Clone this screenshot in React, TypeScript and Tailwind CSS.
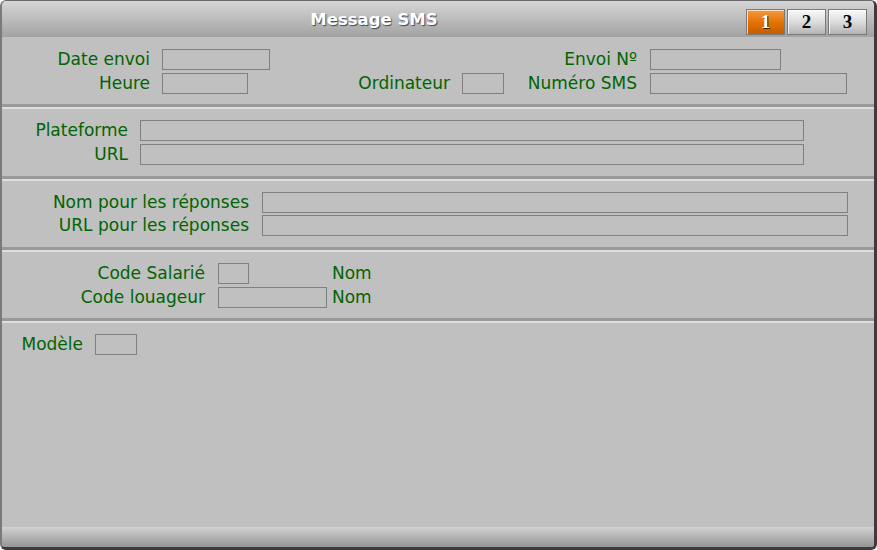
import React from 'react';

const font = { fontFamily: '"DejaVu Sans", Verdana, sans-serif' };

function Field({ w }: { w: number }) {
    return <div className="h-[21px] border border-[#808080] bg-[#c0c0c0] shrink-0" style={{ width: w }} />;
}

function Label({ w, text }: { w: number; text: string }) {
    return (
        <div className="shrink-0 text-right text-[17px] leading-[21px] text-[#006400] whitespace-nowrap" style={{ width: w }}>
            {text}
        </div>
    );
}

function Separator() {
    return (
        <div className="shrink-0">
            <div className="h-[3px] bg-[#999999]" />
            <div className="h-[2px] bg-[#dedede]" />
        </div>
    );
}

function Tab({ n, active }: { n: number; active?: boolean }) {
    return (
        <div
            className={`w-[39px] h-[26px] border border-[#7a7a7a] flex items-center justify-center text-[19px] font-bold ${
                active
                    ? 'bg-gradient-to-b from-[#f39a3a] via-[#e67300] to-[#c45e00] text-white [text-shadow:1px_1px_0_#3a2000]'
                    : 'bg-gradient-to-b from-[#fafafa] via-[#dcdcdc] to-[#b4b4b4] text-black'
            } shadow-[inset_1px_1px_0_rgba(255,255,255,0.7)]`}
            style={{ fontFamily: '"Liberation Serif", "Times New Roman", serif' }}
        >
            {n}
        </div>
    );
}

export default function App() {
    return (
        <div className="w-[877px] h-[550px] bg-white">
            <div
                className="w-full h-full flex flex-col bg-[#c0c0c0] rounded-[6px] overflow-hidden border-t border-l-2 border-r-[3px] border-b-[3px] border-t-[#6a6a6a] border-l-[#7a7a7a] border-r-[#3c3c3c] border-b-[#3c3c3c]"
                style={font}
            >
                {/* TITLE BAR */}
                <div className="h-[36px] shrink-0 flex items-start bg-gradient-to-b from-[#d6d6d6] to-[#a2a2a2]">
                    <div className="flex-1 h-full flex items-center justify-center pt-[3px] text-[16.5px] font-bold text-white [text-shadow:1px_1px_1px_#3a4660]">
                        Message SMS
                    </div>
                    <div className="flex gap-[2px] mt-[8px] mr-[7px]">
                        <Tab n={1} active />
                        <Tab n={2} />
                        <Tab n={3} />
                    </div>
                </div>

                {/* SECTION 1 */}
                <div className="pt-[12px] pb-[10px] flex flex-col gap-[3px]">
                    <div className="flex items-center">
                        <Label w={148} text="Date envoi" />
                        <div className="ml-[12px]"><Field w={108} /></div>
                        <Label w={367} text="Envoi Nº" />
                        <div className="ml-[13px]"><Field w={131} /></div>
                    </div>
                    <div className="flex items-center">
                        <Label w={148} text="Heure" />
                        <div className="ml-[12px]"><Field w={86} /></div>
                        <Label w={202} text="Ordinateur" />
                        <div className="ml-[12px]"><Field w={42} /></div>
                        <Label w={133} text="Numéro SMS" />
                        <div className="ml-[13px]"><Field w={197} /></div>
                    </div>
                </div>
                <Separator />

                {/* SECTION 2 */}
                <div className="pt-[11px] pb-[11px] flex flex-col gap-[3px]">
                    <div className="flex items-center">
                        <Label w={126} text="Plateforme" />
                        <div className="ml-[12px]"><Field w={664} /></div>
                    </div>
                    <div className="flex items-center">
                        <Label w={126} text="URL" />
                        <div className="ml-[12px]"><Field w={664} /></div>
                    </div>
                </div>
                <Separator />

                {/* SECTION 3 */}
                <div className="pt-[11px] pb-[11px] flex flex-col gap-[2px]">
                    <div className="flex items-center">
                        <Label w={247} text="Nom pour les réponses" />
                        <div className="ml-[13px]"><Field w={586} /></div>
                    </div>
                    <div className="flex items-center">
                        <Label w={247} text="URL pour les réponses" />
                        <div className="ml-[13px]"><Field w={586} /></div>
                    </div>
                </div>
                <Separator />

                {/* SECTION 4 */}
                <div className="pt-[11px] pb-[10px] flex flex-col gap-[3px]">
                    <div className="flex items-center">
                        <Label w={203} text="Code Salarié" />
                        <div className="ml-[13px] w-[114px]"><Field w={31} /></div>
                        <span className="text-[17px] leading-[21px] text-[#006400]">Nom</span>
                    </div>
                    <div className="flex items-center">
                        <Label w={203} text="Code louageur" />
                        <div className="ml-[13px] w-[114px]"><Field w={109} /></div>
                        <span className="text-[17px] leading-[21px] text-[#006400]">Nom</span>
                    </div>
                </div>
                <Separator />

                {/* SECTION 5 */}
                <div className="pt-[11px] flex-1">
                    <div className="flex items-center">
                        <Label w={81} text="Modèle" />
                        <div className="ml-[12px]"><Field w={42} /></div>
                    </div>
                </div>

                {/* BOTTOM BAR */}
                <div className="h-[20px] shrink-0 bg-gradient-to-b from-[#d2d2d2] to-[#959595]" />
            </div>
        </div>
    );
}
